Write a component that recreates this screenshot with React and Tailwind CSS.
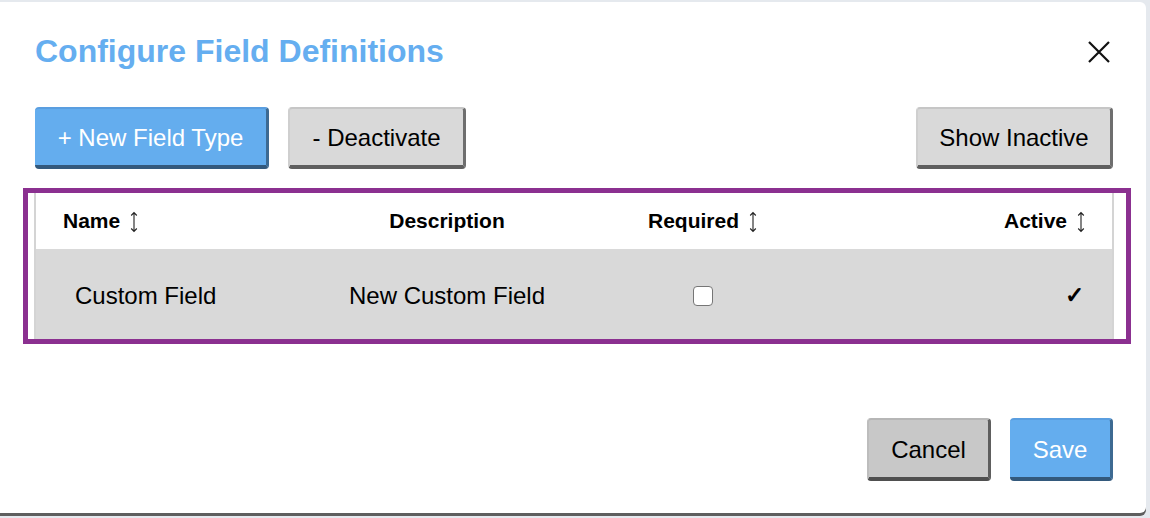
import React from 'react';

// --- Small up/down sort arrow used in the table header ---
const SortIcon = () => (
    <svg width="10" height="24" viewBox="0 0 10 24" className="ml-[9px] mt-[1px]">
        <path d="M5 2.5 L5 21.5 M2.2 5.5 L5 2.5 L7.8 5.5 M2.2 18.5 L5 21.5 L7.8 18.5" fill="none" stroke="#222" strokeWidth="1.1" />
    </svg>
);

const CloseIcon = () => (
    <svg width="24" height="24" viewBox="0 0 24 24">
        <path d="M2 2 L22 22 M22 2 L2 22" stroke="#111" strokeWidth="2.2" />
    </svg>
);

const fields = [
    { name: 'Custom Field', description: 'New Custom Field', required: false, active: true },
];

const App = () => {
    return (
        <div className="h-[518px] w-[1150px] bg-[#e5e9ee] pt-[2px] pr-[4px] overflow-hidden font-['Liberation_Sans',Arial,sans-serif]">
            <div className="h-[511px] bg-white rounded-r-[6px] shadow-[0_3px_0_#5e5e5e] pl-[35px] pr-[33px] pt-[33px] flex flex-col">
                {/* Header */}
                <div className="flex items-center justify-between">
                    <h2 className="text-[32px] leading-none font-bold text-[#65aef0]">Configure Field Definitions</h2>
                    <button className="mr-[2px] mt-[2px]"><CloseIcon /></button>
                </div>

                {/* Toolbar */}
                <div className="flex items-center mt-[40px]">
                    <button className="h-[62px] w-[234px] pt-[2px] rounded-[4px] bg-[#64adee] border-t-2 border-t-[#5a9ee0] border-r-[3px] border-r-[#3d6a92] border-b-4 border-b-[#33597c] text-white text-[24px]">
                        + New Field Type
                    </button>
                    <button className="ml-[19px] h-[62px] w-[178px] pt-[2px] rounded-[4px] bg-[#d9d9d9] border-t-2 border-t-[#c6c6c6] border-l-2 border-l-[#cfcfcf] border-r-[3px] border-r-[#6e6e6e] border-b-4 border-b-[#5f5f5f] text-black text-[24px]">
                        - Deactivate
                    </button>
                    <button className="ml-auto h-[62px] w-[197px] pt-[2px] rounded-[4px] bg-[#d9d9d9] border-t-2 border-t-[#c6c6c6] border-l-2 border-l-[#cfcfcf] border-r-[3px] border-r-[#6e6e6e] border-b-4 border-b-[#5f5f5f] text-black text-[24px]">
                        Show Inactive
                    </button>
                </div>

                {/* Table with focus outline */}
                <div className="mt-[19px] ml-[-12px] mr-[-18px] border-[5px] border-[#8b3090] pl-[6px] pr-[12px]">
                    <div className="border-x-2 border-[#d4d4d4]">
                        <div className="grid grid-cols-[264px_294px_218px_1fr] h-[56px] items-center bg-white text-[21px] font-bold text-black">
                            <div className="flex items-center pl-[27px]">Name<SortIcon /></div>
                            <div className="text-center">Description</div>
                            <div className="flex items-center justify-center">Required<SortIcon /></div>
                            <div className="flex items-center justify-end pr-[26px]">Active<SortIcon /></div>
                        </div>
                        {fields.map((f) => (
                            <div key={f.name} className="grid grid-cols-[264px_294px_218px_1fr] h-[90px] pt-[3px] items-center bg-[#d9d9d9] text-[24px] text-black">
                                <div className="pl-[39px]">{f.name}</div>
                                <div className="text-center">{f.description}</div>
                                <div className="flex justify-center">
                                    <span className="block w-[20px] h-[20px] rounded-[4px] border-[1.5px] border-[#767676] bg-white"></span>
                                </div>
                                <div className="text-right pr-[28px] text-[23px] font-bold">{f.active ? '✓' : ''}</div>
                            </div>
                        ))}
                    </div>
                </div>

                {/* Footer */}
                <div className="flex justify-end mt-[74px]">
                    <button className="h-[63px] w-[124px] pt-[2px] rounded-[4px] bg-[#c8c8c8] border-t-2 border-t-[#b6b6b6] border-l-2 border-l-[#bdbdbd] border-r-[3px] border-r-[#5e5e5e] border-b-4 border-b-[#4f4f4f] text-black text-[24px]">
                        Cancel
                    </button>
                    <button className="ml-[19px] h-[63px] w-[103px] pt-[2px] rounded-[4px] bg-[#64adee] border-t-2 border-t-[#5a9ee0] border-r-[3px] border-r-[#3d6a92] border-b-4 border-b-[#33597c] text-white text-[24px]">
                        Save
                    </button>
                </div>
            </div>
        </div>
    );
};

export default App;
